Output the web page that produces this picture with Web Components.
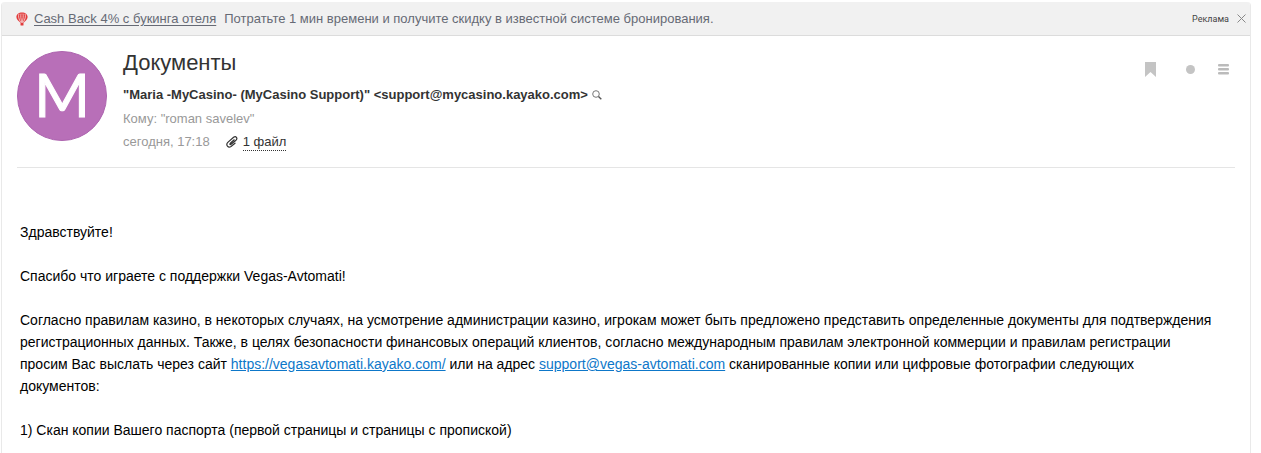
<!DOCTYPE html>
<html lang="ru">
<head>
<meta charset="utf-8">
<title>Документы</title>
<style>
html,body{margin:0;background:#fff}
body{font-family:"Liberation Sans",Arial,sans-serif;font-size:13px;line-height:24px;color:#333;padding:2px 10px 0 1px}
</style>
</head>
<body>
<mail-window>
  <promo-bar slot="promo" link="Cash Back 4% с букинга отеля">Потратьте 1 мин времени и получите скидку в известной системе бронирования.</promo-bar>
  <letter-head subject="Документы" initial="M" sender='"Maria -MyCasino- (MyCasino Support)" &lt;support@mycasino.kayako.com&gt;' recipient='"roman savelev"' date="сегодня, 17:18" files="1 файл"></letter-head>
  <letter-body>
    <p>Здравствуйте!</p>
    <p>Спасибо что играете с поддержки Vegas-Avtomati!</p>
    <p>Согласно правилам казино, в некоторых случаях, на усмотрение администрации казино, игрокам может быть предложено представить определенные документы для подтверждения регистрационных данных. Также, в целях безопасности финансовых операций клиентов, согласно международным правилам электронной коммерции и правилам регистрации просим Вас выслать через сайт <a href="https://vegasavtomati.kayako.com/">https://vegasavtomati.kayako.com/</a> или на адрес <a href="mailto:support@vegas-avtomati.com">support@vegas-avtomati.com</a> сканированные копии или цифровые фотографии следующих документов:</p>
    <p>1) Скан копии Вашего паспорта (первой страницы и страницы с пропиской)</p>
  </letter-body>
</mail-window>
<script>
class BaseElement extends HTMLElement {
  connectedCallback() {
    if (this.shadowRoot) return;
    this.attachShadow({ mode: 'open' }).innerHTML = this.render();
    this.shadowRoot.querySelectorAll('[data-text]').forEach(n => {
      n.textContent = this.getAttribute(n.dataset.text);
    });
  }
}

customElements.define('mail-window', class extends BaseElement {
  render() {
    return `<style>
      :host{display:block;box-sizing:border-box;min-height:calc(100vh - 2px);border:solid #e9e9e9;border-width:0 1px;border-radius:4px 4px 0 0;overflow:hidden}
      main{display:block}
    </style><slot name="promo"></slot><main><slot></slot></main>`;
  }
});

customElements.define('promo-bar', class extends BaseElement {
  render() {
    return `<style>
      :host{display:flex;align-items:center;height:33px;padding:0 4px 0 14px;background:#f1f1f1;border-bottom:1px solid #dcdcdc;color:#666a75}
      svg{display:block;flex:none}
      a{color:inherit;margin:0 8px 0 6px;white-space:nowrap;text-underline-offset:2px}
      .text{flex:1}
      .ad{font-size:9px;font-family:Roboto,sans-serif;color:#444;margin-right:8px}
      button{border:0;padding:0;background:none;display:block}
    </style>
    <svg width="12" height="14" viewBox="0 0 12 14" aria-hidden="true">
      <path d="M6 .4C2.700.4.4 2.400.4 5c0 2.300 1.800 3.800 4 5.800h3.200C9.800 8.800 11.600 7.300 11.600 5 11.600 2.400 9.300.4 6 .4z" fill="#e23b3b"/>
      <path d="M3 1.800C1.900 4 2.900 7.500 4.900 10.500M9 1.800c1.100 2.200.1 5.700-1.900 8.700M5 1.600C4.500 4 4.900 7 5.800 10.600M7 1.600C7.500 4 7.100 7 6.200 10.600" fill="none" stroke="#f6dcdc" stroke-width=".8"/>
      <rect x="4.500" y="11" width="3" height="2.600" rx=".5" fill="#e23b3b"/>
    </svg>
    <a href="#" data-text="link"></a><span class="text"><slot></slot></span>
    <span class="ad">Реклама</span>
    <button type="button" aria-label="Закрыть"><svg width="9" height="9" viewBox="0 0 9 9"><path d="M.5.5l8 8M8.500.5l-8 8" stroke="#888"/></svg></button>`;
  }
});

customElements.define('letter-head', class extends BaseElement {
  render() {
    return `<style>
      :host{display:flex;margin:0 15px;padding:15px 0 14px;border-bottom:1px solid #e5e5e5}
      .avatar{flex:none;box-sizing:border-box;width:90px;height:90px;border:1px solid #ad64af;border-radius:50%;background:#b86fb8;color:#fff;font:60px/84px Lato,sans-serif;-webkit-text-stroke:1px #fff;text-align:center}
      .info{flex:1;margin-left:16px}
      h1{margin:0 0 8px;font-size:22px;line-height:24px;font-weight:400;color:#333}
      .row{display:flex;align-items:center;color:#999}
      .row:last-child{line-height:22px}
      .name{font-weight:700;color:#333}
      .zoom{margin-left:4px}
      .clip{margin:0 5px 0 16px}
      button{border:0;padding:0;background:none;display:block}
      svg{display:block}
      a{color:#333;text-decoration:none;line-height:16px;border-bottom:1px dotted #333}
      .tools{display:flex;align-items:center;height:36px;margin-right:6px}
      .dot{margin:0 23px 0 30px}
    </style>
    <div class="avatar" data-text="initial"></div>
    <div class="info">
      <h1 data-text="subject"></h1>
      <div class="row"><span class="name" data-text="sender"></span>
        <button class="zoom" type="button" aria-label="Найти письма"><svg width="10" height="10" viewBox="0 0 10 10" fill="none" stroke="#777"><circle cx="4" cy="4" r="3.300"/><path d="M6.500 6.500L9.300 9.300" stroke="#555" stroke-width="1.400"/></svg></button></div>
      <div class="row"><span>Кому:&nbsp;</span><span data-text="recipient"></span></div>
      <div class="row"><span data-text="date"></span>
        <svg class="clip" width="12" height="12" viewBox="0 0 12 12" fill="none" stroke="#333" stroke-width="1.200" stroke-linecap="round" stroke-linejoin="round" aria-hidden="true"><path d="M8.200 3.800L4.300 7.300C3.300 8.300 4.200 9 5.100 8.300L10 4.200C12 2.200 9.900-.3 7.600 1.300L1.800 6.400C-.6 9 2.200 12.400 5 10.500L9 7.200"/></svg>
        <a href="#" data-text="files"></a></div>
    </div>
    <div class="tools">
      <button type="button" aria-label="Метка"><svg width="11" height="15" viewBox="0 0 11 15"><path d="M0 0h11v15L5.500 10 0 15z" fill="#c4c4c4"/></svg></button>
      <button class="dot" type="button" aria-label="Не прочитано"><svg width="9" height="9" viewBox="0 0 9 9"><circle cx="4.500" cy="4.500" r="4.500" fill="#c4c4c4"/></svg></button>
      <button type="button" aria-label="Ещё"><svg width="11" height="11" viewBox="0 0 11 11" fill="#bbb"><rect width="11" height="2.500" rx="1"/><rect y="4" width="11" height="2.500" rx="1"/><rect y="8" width="11" height="2.500" rx="1"/></svg></button>
    </div>`;
  }
});

customElements.define('letter-body', class extends BaseElement {
  render() {
    return `<style>
      :host{display:block;padding:53px 36px 0 18px;font-size:14px;line-height:22px;color:#000}
      ::slotted(p){margin:0 0 22px!important}
    </style><slot></slot>`;
  }
  connectedCallback() {
    super.connectedCallback();
    this.querySelectorAll('a').forEach(a => a.style.color = '#0d77c9');
  }
});
</script>
</body>
</html>
